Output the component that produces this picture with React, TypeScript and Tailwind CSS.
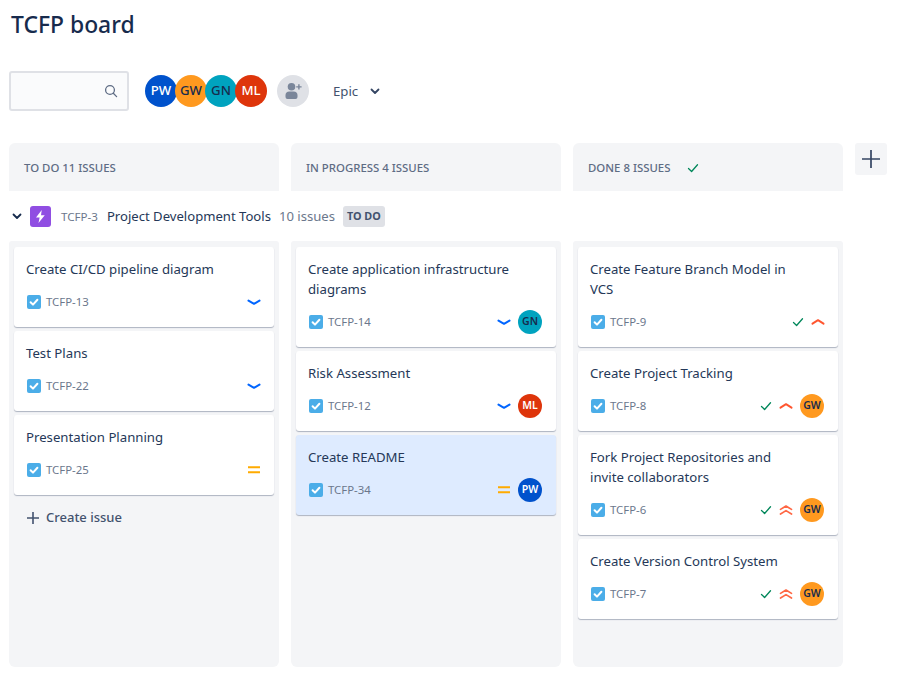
import React from 'react';

const BLUE = '#0065ff';

type Person = 'PW' | 'GW' | 'GN' | 'ML';

const avatarClass: Record<Person, string> = {
  PW: 'bg-[#0052cc] text-white',
  GW: 'bg-[#ff991f] text-[#172b4d]',
  GN: 'bg-[#00a3bf] text-[#172b4d]',
  ML: 'bg-[#de350b] text-white',
};

const Avatar = ({ name }: { name: Person }) => (
  <div className={`w-6 h-6 rounded-full flex items-center justify-center text-[10.5px] font-semibold ${avatarClass[name]}`}>
    {name}
  </div>
);

const Check = ({ className }: { className: string }) => (
  <svg viewBox="0 0 12 12" className={className} fill="none" stroke="currentColor" strokeWidth="1.3" strokeLinecap="round" strokeLinejoin="round">
    <path d="M1.5 6.5 4.6 9.5 10.5 2.8" />
  </svg>
);

const StoryIcon = () => (
  <svg viewBox="0 0 14 14" className="w-3.5 h-3.5 shrink-0">
    <rect width="14" height="14" rx="2" fill="#4bade8" />
    <path d="M3.6 7.2 6 9.6 10.4 4.8" fill="none" stroke="#fff" strokeWidth="2" strokeLinecap="round" strokeLinejoin="round" />
  </svg>
);

type Priority = 'low' | 'medium' | 'high' | 'highest';

const PriorityIcon = ({ level }: { level: Priority }) => (
  <svg viewBox="0 0 14 14" className="w-3.5 h-3.5 shrink-0" fill="none" strokeWidth="2" strokeLinecap="round" strokeLinejoin="round">
    {level === 'low' && <path d="M1.5 5.6 7 8.8 12.5 5.6" stroke={BLUE} />}
    {level === 'medium' && <path d="M1 4.2H13M1 9.2H13" stroke="#ffab00" strokeLinecap="butt" />}
    {level === 'high' && <path d="M1.5 8.6 7 5.2 12.5 8.6" stroke="#ff5630" />}
    {level === 'highest' && <path d="M1.5 6.4 7 3 12.5 6.4M1.5 11 7 7.6 12.5 11" stroke="#ff5630" strokeOpacity="0.9" strokeWidth="1.7" />}
  </svg>
);

type Issue = {
  title: string;
  id: string;
  priority: Priority;
  person?: Person;
  done?: boolean;
  selected?: boolean;
};

const todo: Issue[] = [
  { title: 'Create CI/CD pipeline diagram', id: 'TCFP-13', priority: 'low' },
  { title: 'Test Plans', id: 'TCFP-22', priority: 'low' },
  { title: 'Presentation Planning', id: 'TCFP-25', priority: 'medium' },
];

const inProgress: Issue[] = [
  { title: 'Create application infrastructure diagrams', id: 'TCFP-14', priority: 'low', person: 'GN' },
  { title: 'Risk Assessment', id: 'TCFP-12', priority: 'low', person: 'ML' },
  { title: 'Create README', id: 'TCFP-34', priority: 'medium', person: 'PW', selected: true },
];

const done: Issue[] = [
  { title: 'Create Feature Branch Model in VCS', id: 'TCFP-9', priority: 'high', done: true },
  { title: 'Create Project Tracking', id: 'TCFP-8', priority: 'high', person: 'GW', done: true },
  { title: 'Fork Project Repositories and invite collaborators', id: 'TCFP-6', priority: 'highest', person: 'GW', done: true },
  { title: 'Create Version Control System', id: 'TCFP-7', priority: 'highest', person: 'GW', done: true },
];

const Card = ({ issue }: { issue: Issue }) => (
  <div className={`rounded-[3px] pl-3 pr-3 pt-3 pb-[13px] shadow-[0_1px_1px_rgba(9,30,66,0.3)] ${issue.selected ? 'bg-[#deebff]' : 'bg-white'}`}>
    <div className="text-[13.2px] leading-5 text-[#253858] pr-[25px]">{issue.title}</div>
    <div className="flex items-center h-6 mt-[11px] pr-[1px]">
      <div className="ml-[1px] mr-[5px]"><StoryIcon /></div>
      <div className="flex-1 text-[11.4px] text-[#6b778c]">{issue.id}</div>
      {issue.done && <Check className="w-3 h-3 mr-[7px] text-[#00875a]" />}
      <PriorityIcon level={issue.priority} />
      {issue.person && <div className="ml-[7px] mr-px"><Avatar name={issue.person} /></div>}
    </div>
  </div>
);

const ColumnHeader = ({ label, check }: { label: string; check?: boolean }) => (
  <div className="w-[270px] h-12 rounded-t-[6px] bg-[#f4f5f7] flex items-center pl-[15px] pt-px">
    <span className="text-[11.4px] font-medium text-[#5e6c84]">{label}</span>
    {check && <Check className="w-3 h-3 ml-[17px] text-[#00875a]" />}
  </div>
);

const Column = ({ issues, children }: { issues: Issue[]; children?: React.ReactNode }) => (
  <div className="w-[270px] h-[426px] rounded-b-[6px] rounded-t-[3px] bg-[#f4f5f7] p-[5px] pt-[6px] flex flex-col gap-1">
    {issues.map((issue) => (
      <Card key={issue.id} issue={issue} />
    ))}
    {children}
  </div>
);

export default function App() {
  return (
    <div className="w-[924px] h-[678px] bg-white overflow-hidden pl-[9px] pt-[9px] font-['Noto_Sans',sans-serif] text-[#172b4d]">
      <h1 className="pl-[2px] text-[22.9px] leading-8 font-medium text-[#172b4d]">TCFP board</h1>

      <div className="flex items-center mt-[30px] h-10">
        <div className="w-[120px] h-10 rounded-[3px] border-2 border-[#dfe1e6] bg-[#fafbfc] flex items-center justify-end pr-[9px]">
          <svg viewBox="0 0 14 14" className="w-3.5 h-3.5 text-[#5e6c84]" fill="none" stroke="currentColor" strokeWidth="1.3" strokeLinecap="round">
            <circle cx="6" cy="6" r="4.4" />
            <path d="M9.3 9.3 12.6 12.6" />
          </svg>
        </div>
        <div className="flex ml-4">
          {(['PW', 'GW', 'GN', 'ML'] as Person[]).map((name, i) => (
            <div key={name} className={`w-8 h-8 rounded-full flex items-center justify-center text-[13.2px] font-medium ${avatarClass[name]} ${i > 0 ? '-ml-0.5' : ''}`}>
              {name}
            </div>
          ))}
        </div>
        <div className="w-8 h-8 ml-[10px] rounded-full bg-[#dfe1e6] flex items-center justify-center">
          <svg viewBox="0 0 24 24" className="w-6 h-6" fill="#7a869a">
            <circle cx="10.5" cy="7.8" r="3.8" />
            <path d="M4.5 16a3.8 3.8 0 0 1 3.8-3.6h4.4a3.8 3.8 0 0 1 3.8 3.6v2a2 2 0 0 1-2 2H6.5a2 2 0 0 1-2-2z" />
            <path d="M17.2 5.2h1.4v2h2v1.4h-2v2h-1.4v-2h-2V7.2h2z" />
          </svg>
        </div>
        <span className="ml-6 pt-px text-[13.2px] text-[#42526e]">Epic</span>
        <svg viewBox="0 0 12 12" className="w-3 h-3 ml-[11px] text-[#344563]" fill="none" stroke="currentColor" strokeWidth="1.8" strokeLinecap="round" strokeLinejoin="round">
          <path d="M2.5 4.5 6 8 9.5 4.5" />
        </svg>
      </div>

      <div className="flex gap-3 mt-8 items-start">
        <ColumnHeader label="TO DO 11 ISSUES" />
        <ColumnHeader label="IN PROGRESS 4 ISSUES" />
        <ColumnHeader label="DONE 8 ISSUES" check />
        <div className="w-8 h-8 rounded-[3px] bg-[#f4f5f7] flex items-center justify-center">
          <svg viewBox="0 0 20 20" className="w-5 h-5 text-[#344563]" fill="none" stroke="currentColor" strokeWidth="1.7">
            <path d="M10 1V19M1 10H19" />
          </svg>
        </div>
      </div>

      <div className="flex items-center h-[50px]">
        <svg viewBox="0 0 12 12" className="w-3 h-3 ml-[2px] text-[#172b4d]" fill="none" stroke="currentColor" strokeWidth="1.8" strokeLinecap="round" strokeLinejoin="round">
          <path d="M2.5 4.5 6 8 9.5 4.5" />
        </svg>
        <div className="w-[21px] h-[21px] ml-[7px] rounded-[3px] bg-[#904ee2] flex items-center justify-center">
          <svg viewBox="0 0 12 12" className="w-[15px] h-[15px]" fill="#fff">
            <path d="M7 .8 2.4 6.8h2.9L4.4 11.2 9.4 4.9H6.4z" />
          </svg>
        </div>
        <span className="ml-[10px] pt-px text-[11.6px] text-[#6b778c]">TCFP-3</span>
        <span className="ml-[9px] pt-px text-[13.1px] text-[#253858]">Project Development Tools</span>
        <span className="ml-2 pt-px text-[13.1px] text-[#6b778c]">10 issues</span>
        <span className="ml-2 h-[21px] px-1 rounded-[3px] bg-[#dfe1e6] flex items-center text-[10.8px] font-bold text-[#42526e]">TO DO</span>
      </div>

      <div className="flex gap-3 items-start">
        <Column issues={todo}>
          <div className="flex items-center h-8 mt-[3px] pl-3 text-[13px] font-medium text-[#42526e]">
            <svg viewBox="0 0 14 14" className="w-3.5 h-3.5 mr-[6px] text-[#42526e]" fill="none" stroke="currentColor" strokeWidth="1.6">
              <path d="M7 1V13M1 7H13" />
            </svg>
            Create issue
          </div>
        </Column>
        <Column issues={inProgress} />
        <Column issues={done} />
      </div>
    </div>
  );
}
